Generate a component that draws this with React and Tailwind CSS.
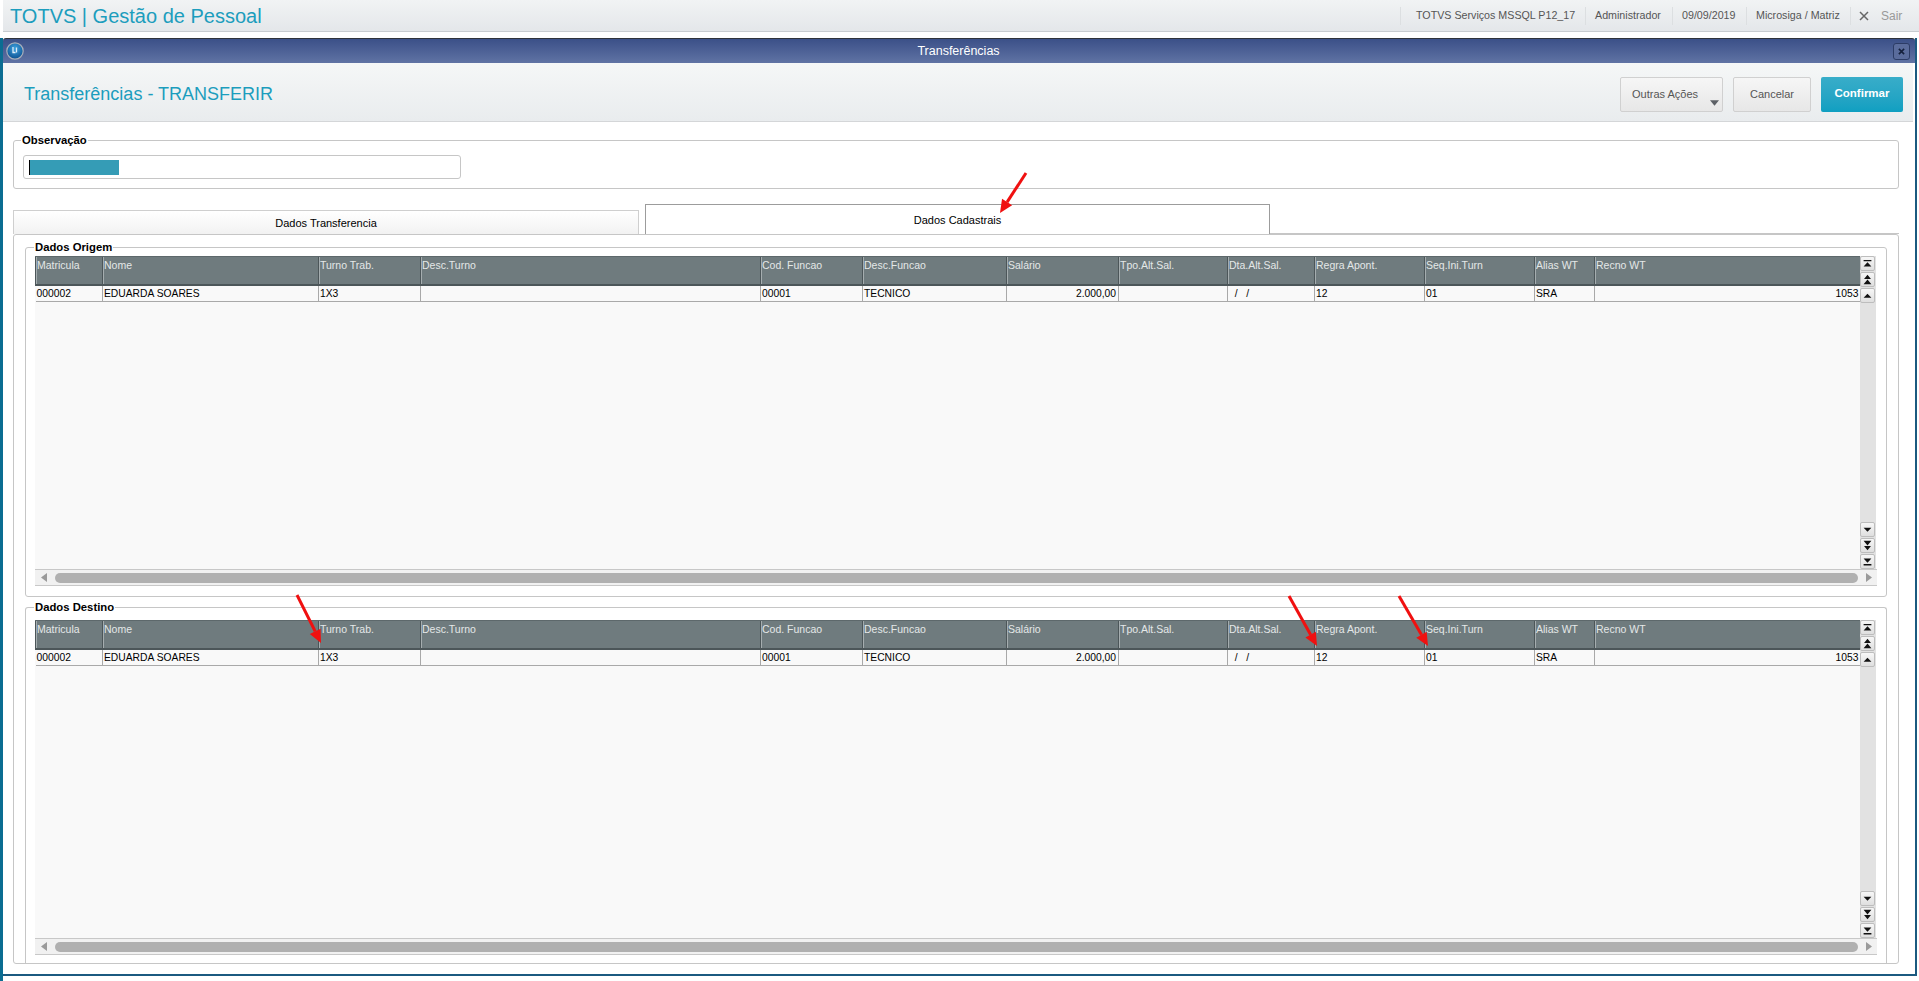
import React from "react";

const columns = [
  { title: "Matricula", width: 67, value: "000002" },
  { title: "Nome", width: 216, value: "EDUARDA SOARES" },
  { title: "Turno Trab.", width: 102, value: "1X3" },
  { title: "Desc.Turno", width: 340, value: "" },
  { title: "Cod. Funcao", width: 102, value: "00001" },
  { title: "Desc.Funcao", width: 144, value: "TECNICO" },
  { title: "Salário", width: 112, value: "2.000,00", right: true },
  { title: "Tpo.Alt.Sal.", width: 109, value: "" },
  { title: "Dta.Alt.Sal.", width: 87, value: "  /   /" },
  { title: "Regra Apont.", width: 110, value: "12" },
  { title: "Seq.Ini.Turn", width: 110, value: "01" },
  { title: "Alias WT", width: 60, value: "SRA" },
  { title: "Recno WT", width: 266, value: "1053", right: true },
];

const glyphs = {
  top: "M3 3.5h9v1.5H3z M7.5 6L3 11h9z",
  pageUp: "M7.5 2L3.5 7h8z M7.5 7.5L3 13h9z",
  up: "M7.5 5.5L3 10h9z",
  down: "M3 5.5h9L7.5 10z",
  pageDown: "M3 2h9L7.5 7.5z M3.5 8h8l-4 5z",
  bottom: "M3 4h9L7.5 9z M3 10.5h9V12H3z",
};

const ScrollButton = ({ type }) => (
  <div className="w-[15px] h-[15px] rounded-[2px] border border-[#bdbdbd] bg-gradient-to-b from-[#f7f7f7] to-[#dfdfdf]">
    <svg viewBox="0 0 15 15" className="w-[13px] h-[13px]">
      <path d={glyphs[type]} fill="#111" />
    </svg>
  </div>
);

const Grid = ({ height }) => (
  <div className="flex flex-col w-[1842px]" style={{ height }}>
    <div className="flex flex-1 min-h-0">
      <div className="w-[1825px] bg-[#f9f9f9]">
        <table className="table-fixed w-[1825px] leading-[14px]">
          <colgroup>
            {columns.map((col) => (
              <col key={col.title} style={{ width: col.width }} />
            ))}
          </colgroup>
          <thead>
            <tr className="h-[28px] bg-[#6f7b7e]">
              {columns.map((col) => (
                <th
                  key={col.title}
                  className="align-top text-left text-[10.5px] font-normal text-[#e4e8e8] pl-[1px] pt-[1px] border-l border-b-2 border-l-[#4c5659] border-b-[#4c5659] border-t border-t-[#5d686b] shadow-[inset_1px_0_0_#a5adaf] overflow-hidden whitespace-nowrap"
                >
                  {col.title}
                </th>
              ))}
            </tr>
          </thead>
          <tbody>
            <tr className="h-[17px]">
              {columns.map((col) => (
                <td
                  key={col.title}
                  className={`first:border-l-0 border-l border-b border-[#a9a9a9] pt-[1px] text-[10.3px] text-black whitespace-pre overflow-hidden ${
                    col.right ? "text-right pr-[2px]" : "text-left pl-[1px]"
                  }`}
                >
                  {col.value}
                </td>
              ))}
            </tr>
          </tbody>
        </table>
      </div>
      <div className="w-[16px] bg-[#e2e2e2] flex flex-col justify-between">
        <div className="flex flex-col gap-[1px]">
          <ScrollButton type="top" />
          <ScrollButton type="pageUp" />
          <ScrollButton type="up" />
        </div>
        <div className="flex flex-col gap-[1px]">
          <ScrollButton type="down" />
          <ScrollButton type="pageDown" />
          <ScrollButton type="bottom" />
        </div>
      </div>
    </div>
    <div className="h-[17px] flex items-center bg-[#f1f1f1] border-y border-[#c8c8c8]">
      <svg viewBox="0 0 20 15" className="w-[20px] h-[15px]">
        <path d="M12 3v9L6 7.5z" fill="#9a9a9a" />
      </svg>
      <div className="w-[1803px] h-[10px] rounded-[5px] bg-[#b0b0b0]" />
      <svg viewBox="0 0 19 15" className="w-[19px] h-[15px]">
        <path d="M8 3v9l6-4.5z" fill="#9a9a9a" />
      </svg>
    </div>
  </div>
);

const GroupBox = ({ title, className, legendClass, children }) => (
  <fieldset className={`border border-[#c6c6c6] rounded-[3px] ${className}`}>
    <legend className={`px-[1px] text-[11.3px] leading-[14px] font-bold text-black ${legendClass}`}>{title}</legend>
    {children}
  </fieldset>
);

export default function App() {
  return (
    <div className="w-[1919px] h-[981px] overflow-hidden bg-white font-['Liberation_Sans',Arial,sans-serif]">
      {/* barra do topo */}
      <div className="ml-[3px] h-[32px] flex items-center justify-between bg-gradient-to-b from-[#f1f3f4] to-[#e4e7ea] border-b border-[#c8ccd0]">
        <div className="pl-[7px] pt-[1px] text-[20px] leading-[24px] text-[#1c9dbd]">TOTVS | Gestão de Pessoal</div>
        <div className="flex items-center h-[18px] text-[10.7px] text-[#555]">
          <div className="w-[185px] h-full flex items-center border-l border-[#dcdfe1] pl-[15px]">TOTVS Serviços MSSQL P12_17</div>
          <div className="w-[87px] h-full flex items-center border-l border-[#dcdfe1] pl-[9px]">Administrador</div>
          <div className="w-[74px] h-full flex items-center border-l border-[#dcdfe1] pl-[9px]">09/09/2019</div>
          <div className="w-[104px] h-full flex items-center border-l border-[#dcdfe1] pl-[9px]">Microsiga / Matriz</div>
          <div className="w-[69px] h-full flex items-center border-l border-[#dcdfe1] pl-[8px] gap-[12px]">
            <svg viewBox="0 0 10 10" className="w-[10px] h-[10px]">
              <path d="M1 1l8 8M9 1l-8 8" stroke="#666" strokeWidth="1.5" />
            </svg>
            <span className="text-[12px] text-[#999]">Sair</span>
          </div>
        </div>
      </div>
      <div className="h-[6px]" />

      {/* janela */}
      <div className="h-[943px] border-l-[3px] border-[#0b6d92]">
        <div className="w-[1914px] h-[938px] flex flex-col border-r-2 border-b-2 border-[#1b5a80]">
          <div className="h-[25px] flex items-center justify-between relative rounded-t-[3px] border-t border-[#30343c] bg-gradient-to-b from-[#3b5088] to-[#6073a4]">
            <svg viewBox="0 0 18 18" className="ml-[3px] w-[18px] h-[18px]">
              <defs>
                <radialGradient id="logo" cx="50%" cy="35%" r="65%">
                  <stop offset="0%" stopColor="#3fa4e0" />
                  <stop offset="100%" stopColor="#0b4f90" />
                </radialGradient>
              </defs>
              <circle cx="9" cy="9" r="8.2" fill="url(#logo)" stroke="#a9b0bb" strokeWidth="1.2" />
              <path d="M7 5v5.5h2.5M10.5 5.5v5" fill="none" stroke="#dcecf8" strokeWidth="1.3" />
            </svg>
            <div className="text-[12.5px] text-white">Transferências</div>
            <div className="mr-[5px] w-[17px] h-[17px] flex items-center justify-center rounded-[3px] border border-[#2c3c66] bg-[#5a6c9c]">
              <svg viewBox="0 0 8 8" className="w-[7px] h-[7px]">
                <path d="M1 1l6 6M7 1l-6 6" stroke="#14203c" strokeWidth="1.8" />
              </svg>
            </div>
          </div>

          <div className="w-[1910px] h-[59px] pt-[4px] flex items-center justify-between bg-gradient-to-b from-[#f5f7f7] to-[#e9ecee] border-b border-[#d4d6d8]">
            <div className="pl-[21px] text-[18px] text-[#1c9dbd]">Transferências - TRANSFERIR</div>
            <div className="flex items-center gap-[10px] pr-[10px] text-[11px] text-[#555]">
              <div className="relative w-[103px] h-[35px] rounded-[2px] border border-[#d0d0d0] bg-gradient-to-b from-[#f6f6f6] to-[#e7e7e7] pl-[11px] flex items-center">
                Outras Ações
                <svg viewBox="0 0 10 6" className="absolute right-[3px] bottom-[5px] w-[9px] h-[6px]">
                  <path d="M0 0h10L5 6z" fill="#5c6066" />
                </svg>
              </div>
              <div className="w-[78px] h-[35px] rounded-[2px] border border-[#d0d0d0] bg-gradient-to-b from-[#f6f6f6] to-[#e7e7e7] flex items-center justify-center">
                Cancelar
              </div>
              <div className="w-[82px] h-[35px] rounded-[2px] bg-gradient-to-b from-[#38adc9] to-[#0f9fc1] flex items-center justify-center text-[11.5px] font-bold text-white">
                Confirmar
              </div>
            </div>
          </div>

          <div className="flex-1 pl-[10px] pt-[11px] bg-white">
            <GroupBox title="Observação" className="w-[1886px] h-[56px] pl-[9px] pt-[8px]" legendClass="-ml-[2px]">
              <div className="w-[438px] h-[24px] border border-[#c6c6c6] rounded-[3px] pl-[5px] pt-[4px]">
                <div className="w-[90px] h-[15px] bg-[#359cb6] border-l border-black" />
              </div>
            </GroupBox>

            <div className="mt-[15px] w-[1886px] h-[30px] flex items-end">
              <div className="w-[626px] h-[24px] pt-[1px] flex items-center justify-center border border-b-0 border-[#cfcfcf] bg-gradient-to-b from-white to-[#f2f2f2] text-[11px] text-black">
                Dados Transferencia
              </div>
              <div className="w-[6px]" />
              <div className="w-[625px] h-[30px] pt-[1px] flex items-center justify-center border border-b-0 border-[#9c9c9c] bg-white text-[11px] text-black">
                Dados Cadastrais
              </div>
              <div className="flex-1 h-[2px] border-b border-[#c6c6c6]" />
            </div>

            <div className="w-[1886px] h-[730px] border border-[#c6c6c6] rounded-[3px] pl-[11px] pt-[5px]">
              <GroupBox title="Dados Origem" className="w-[1862px] h-[357px] pl-[9px] pt-[2px]" legendClass="-ml-[1px]">
                <Grid height={330} />
              </GroupBox>
              <GroupBox title="Dados Destino" className="mt-[3px] w-[1862px] h-[363px] border-b-0 rounded-b-none pl-[9px] pt-[6px]" legendClass="-ml-[1px]">
                <Grid height={335} />
              </GroupBox>
            </div>
          </div>
        </div>
      </div>

      {/* setas vermelhas de anotação */}
      <svg className="absolute left-0 top-0 w-[1919px] h-[981px] pointer-events-none" viewBox="0 0 1919 981">
        {[
          [1026, 173, 1000, 213],
          [297, 595, 321, 643],
          [1289, 596, 1317, 646],
          [1399, 596, 1428, 646],
        ].map(([x1, y1, x2, y2]) => {
          const len = Math.hypot(x2 - x1, y2 - y1);
          const ux = (x2 - x1) / len;
          const uy = (y2 - y1) / len;
          const bx = x2 - ux * 13;
          const by = y2 - uy * 13;
          return (
            <g key={x1}>
              <line x1={x1} y1={y1} x2={bx} y2={by} stroke="#f01010" strokeWidth="3" />
              <polygon
                points={`${x2},${y2} ${bx - uy * 6},${by + ux * 6} ${bx + uy * 6},${by - ux * 6}`}
                fill="#f01010"
              />
            </g>
          );
        })}
      </svg>
    </div>
  );
}
